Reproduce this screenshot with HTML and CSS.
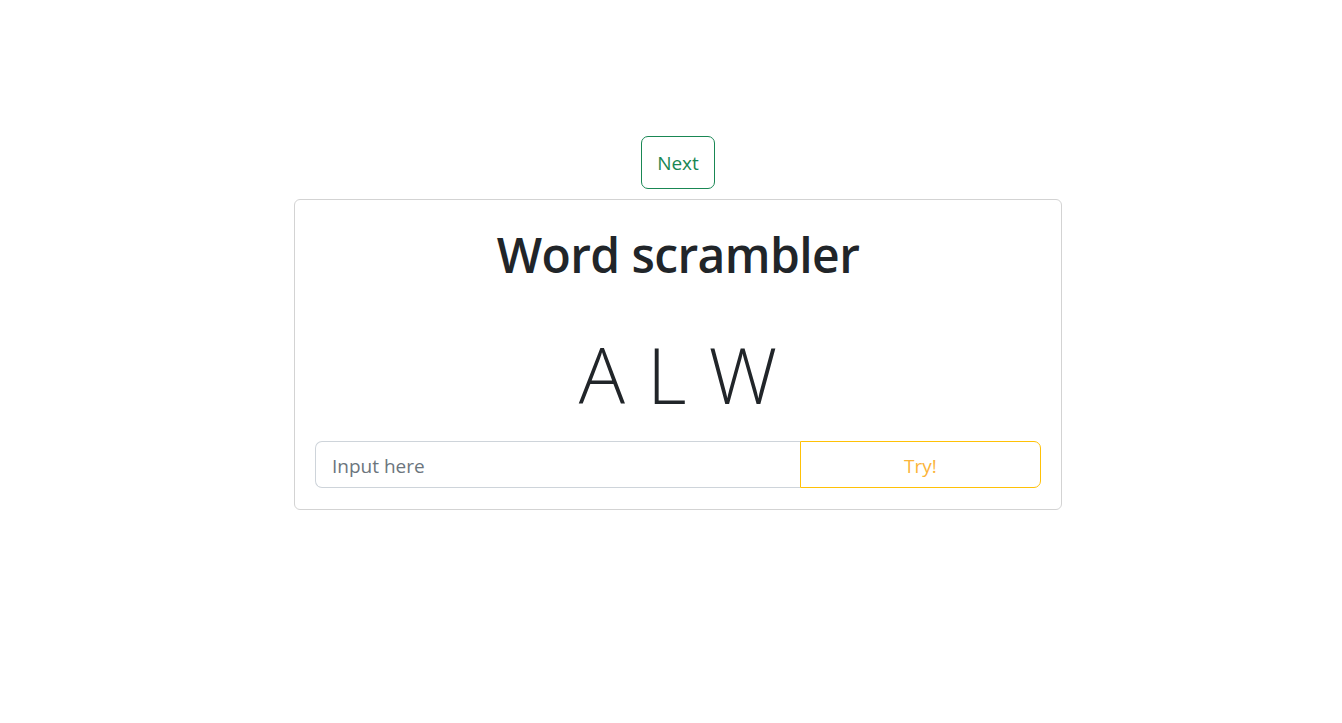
FILE: index.html
```html
<!DOCTYPE html>
<html lang="en">
<head>
<meta charset="utf-8">
<title>Word scrambler</title>
<link rel="stylesheet" href="styles.css">
</head>
<body>
<main class="page">
  <button class="btn-next" type="button">Next</button>
  <section class="card">
    <h1 class="title">Word scrambler</h1>
    <div class="letters">A L W</div>
    <form class="input-group">
      <input class="guess" type="text" placeholder="Input here">
      <button class="btn-try" type="button">Try!</button>
    </form>
  </section>
</main>
</body>
</html>
```
FILE: styles.css
```css
* { box-sizing: border-box; }
html, body { margin: 0; padding: 0; background: #fff; }
body {
  font-family: "Open Sans", "Noto Sans", "Liberation Sans", sans-serif;
  color: #212529;
}
.page {
  display: flex;
  flex-direction: column;
  align-items: center;
  padding-top: 136px;
  padding-left: 14px;
}
.btn-next {
  height: 53px;
  padding: 0 15px;
  font-family: inherit;
  font-size: 19px;
  color: #198754;
  background: #fff;
  border: 1px solid #198754;
  border-radius: 7px;
  margin-bottom: 10px;
}
.card {
  width: 768px;
  border: 1px solid #d3d3d3;
  border-radius: 6px;
  padding: 26px 20px 21px;
  display: flex;
  flex-direction: column;
  align-items: center;
}
.title {
  margin: 0;
  font-size: 48px;
  font-weight: 600;
  line-height: 1.2;
  letter-spacing: -0.6px;
}
.letters {
  margin-top: 45px;
  font-size: 77px;
  font-weight: 300;
  line-height: 1.2;
  word-spacing: 2px;
}
.input-group {
  margin-top: 20px;
  width: 100%;
  display: flex;
  height: 47px;
}
.guess {
  flex: 0 0 485px;
  height: 100%;
  border: 1px solid #ced4da;
  border-right: none;
  border-radius: 7px 0 0 7px;
  padding: 3px 16px 0;
  font-family: inherit;
  font-size: 19px;
  color: #212529;
  outline: none;
}
.guess::placeholder { color: #6c757d; }
.btn-try {
  flex: 1;
  height: 100%;
  border: 1px solid #ffc107;
  border-radius: 0 7px 7px 0;
  background: #fff;
  color: #fbb43a;
  font-family: inherit;
  font-size: 19px;
  padding: 3px 0 0;
}
```
